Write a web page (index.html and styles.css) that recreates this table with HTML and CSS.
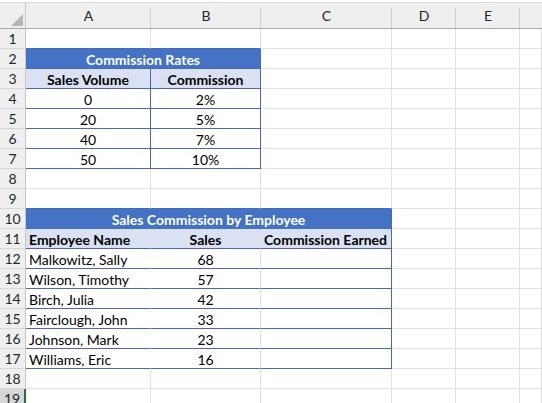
FILE: index.html
```html
<!DOCTYPE html>
<html>
<head>
<meta charset="utf-8">
<link rel="stylesheet" href="styles.css">
</head>
<body>
<div class="sheet">
  <div class="topbar"></div>
  <div class="grid">
    <div class="ch corner"><svg width="26" height="25" viewBox="0 0 26 25"><polygon points="11,23 23,23 23,11" fill="#b7b7b7"/></svg></div>
    <div class="ch">A</div>
    <div class="ch">B</div>
    <div class="ch">C</div>
    <div class="ch">D</div>
    <div class="ch">E</div>
    <div class="ch last"></div>

    <div class="rh">1</div><div class="c bb"></div><div class="c bb"></div><div class="c"></div><div class="c"></div><div class="c"></div><div class="c"></div>

    <div class="rh tb">2</div><div class="c title span2 br bb">Commission Rates</div><div class="c"></div><div class="c"></div><div class="c"></div><div class="c"></div>

    <div class="rh tb">3</div><div class="c hdr center br bb">Sales Volume</div><div class="c hdr center br bb">Commission</div><div class="c"></div><div class="c"></div><div class="c"></div><div class="c"></div>

    <div class="rh tb">4</div><div class="c w center br bb">0</div><div class="c w center br bb">2%</div><div class="c"></div><div class="c"></div><div class="c"></div><div class="c"></div>
    <div class="rh tb">5</div><div class="c w center br bb">20</div><div class="c w center br bb">5%</div><div class="c"></div><div class="c"></div><div class="c"></div><div class="c"></div>
    <div class="rh tb">6</div><div class="c w center br bb">40</div><div class="c w center br bb">7%</div><div class="c"></div><div class="c"></div><div class="c"></div><div class="c"></div>
    <div class="rh tb">7</div><div class="c w center br bb">50</div><div class="c w center br bb">10%</div><div class="c"></div><div class="c"></div><div class="c"></div><div class="c"></div>

    <div class="rh">8</div><div class="c"></div><div class="c"></div><div class="c"></div><div class="c"></div><div class="c"></div><div class="c"></div>
    <div class="rh">9</div><div class="c bb"></div><div class="c bb"></div><div class="c bb"></div><div class="c"></div><div class="c"></div><div class="c"></div>

    <div class="rh tb">10</div><div class="c title span3 br bfill">Sales Commission by Employee</div><div class="c"></div><div class="c"></div><div class="c"></div>

    <div class="rh tb">11</div><div class="c hdr left hide bb">Employee Name</div><div class="c hdr center hide bb">Sales</div><div class="c hdr right br bb">Commission Earned</div><div class="c"></div><div class="c"></div><div class="c"></div>

    <div class="rh tb">12</div><div class="c w left whide bb">Malkowitz, Sally</div><div class="c w center bb">68</div><div class="c w br bb"></div><div class="c"></div><div class="c"></div><div class="c"></div>
    <div class="rh tb">13</div><div class="c w left whide bb">Wilson, Timothy</div><div class="c w center bb">57</div><div class="c w br bb"></div><div class="c"></div><div class="c"></div><div class="c"></div>
    <div class="rh tb">14</div><div class="c w left whide bb">Birch, Julia</div><div class="c w center bb">42</div><div class="c w br bb"></div><div class="c"></div><div class="c"></div><div class="c"></div>
    <div class="rh tb">15</div><div class="c w left whide bb">Fairclough, John</div><div class="c w center bb">33</div><div class="c w br bb"></div><div class="c"></div><div class="c"></div><div class="c"></div>
    <div class="rh tb">16</div><div class="c w left whide bb">Johnson, Mark</div><div class="c w center bb">23</div><div class="c w br bb"></div><div class="c"></div><div class="c"></div><div class="c"></div>
    <div class="rh tb">17</div><div class="c w left whide bb">Williams, Eric</div><div class="c w center bb">16</div><div class="c w br bb"></div><div class="c"></div><div class="c"></div><div class="c"></div>

    <div class="rh">18</div><div class="c"></div><div class="c"></div><div class="c"></div><div class="c"></div><div class="c"></div><div class="c"></div>
    <div class="rh sel">19</div><div class="c"></div><div class="c"></div><div class="c"></div><div class="c"></div><div class="c"></div><div class="c"></div>
  </div>
</div>
</body>
</html>
```
FILE: styles.css
```css
html, body {
  margin: 0;
  padding: 0;
  background: #ffffff;
}
.sheet {
  width: 542px;
  height: 403px;
  overflow: hidden;
  font-family: Lato, "Open Sans", sans-serif;
  font-size: 14px;
  color: #000;
}
.topbar {
  height: 2px;
  background: #ffffff;
  border-bottom: 1px solid #dadada;
}
.grid {
  display: grid;
  grid-template-columns: 26px 125px 110px 131px 64px 64px 1fr;
  grid-template-rows: 26px;
  grid-auto-rows: 20px;
}
.ch {
  position: relative;
  background: #efefef;
  border-bottom: 1px solid #a9a9a9;
  text-align: center;
  line-height: 25px;
  color: #262626;
  font-size: 14px;
}
.ch::after {
  content: "";
  position: absolute;
  right: 0;
  top: 5px;
  bottom: 0;
  width: 1px;
  background: #d0d0d0;
}
.ch.corner::after {
  top: 0;
  background: #c6c6c6;
}
.ch.last::after { display: none; }
.corner svg { display: block; }
.rh {
  background: #efefef;
  border-right: 1px solid #c6c6c6;
  border-bottom: 1px solid #d6d6d6;
  text-align: center;
  line-height: 20px;
  color: #262626;
  font-size: 14px;
}
.rh.sel {
  background: #d6d6d6;
  border-right: 2px solid #217346;
  color: #1e1e1e;
}
.c {
  border-right: 1px solid #e1e1e1;
  border-bottom: 1px solid #e1e1e1;
  line-height: 19px;
  padding: 1px 3px 0 3px;
  white-space: nowrap;
  overflow: hidden;
}
.center { text-align: center; }
.left { text-align: left; }
.right { text-align: right; padding-right: 4px; }
.span2 { grid-column: span 2; }
.span3 { grid-column: span 3; }
.title {
  background: #4472c4;
  color: #ffffff;
  font-weight: 700;
  text-align: center;
}
.hdr {
  background: #d9e1f2;
  font-weight: 700;
}
.w { background: #ffffff; }
.br { border-right-color: #4a69b5; }
.bb { border-bottom-color: #4a69b5; }
.bfill { border-bottom-color: #4472c4; }
.hide { border-right-color: #d9e1f2; }
.whide { border-right-color: #ffffff; }
```
